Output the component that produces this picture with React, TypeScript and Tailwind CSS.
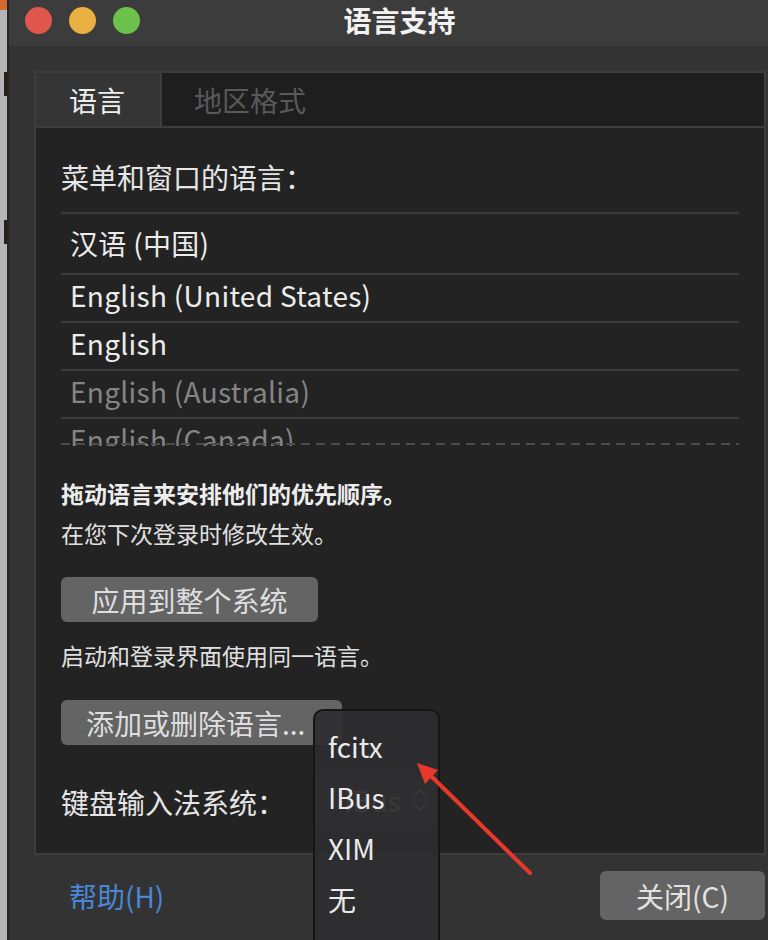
const langs = [
  { label: "汉语 (中国)", dim: false, h: "h-[61px] pb-[2px]" },
  { label: "English (United States)", dim: false, h: "h-[48px] pb-[6px]" },
  { label: "English", dim: false, h: "h-[48px] pb-[6px]" },
  { label: "English (Australia)", dim: true, h: "h-[48px] pb-[6px]" },
  { label: "English (Canada)", dim: true, h: "h-[48px] pb-[6px]" },
];

const methods = ["fcitx", "IBus", "XIM", "无"];

function TitleBar() {
  return (
    <div className="h-[46px] bg-[#3c3c3c] grid grid-cols-[1fr_auto_1fr] items-start">
      <div className="flex gap-[17px] pl-[16px] pt-[7px]">
        <div className="w-[27px] h-[27px] rounded-full bg-[#e0574d]" />
        <div className="w-[27px] h-[27px] rounded-full bg-[#eab041]" />
        <div className="w-[27px] h-[27px] rounded-full bg-[#6cc14a]" />
      </div>
      <div className="ml-[22px] pt-[2px] text-[28px] leading-[36px] font-bold text-[#f2f2f2]">
        语言支持
      </div>
      <div />
    </div>
  );
}

function Combo() {
  return (
    <div className="w-[122px] h-[54px] rounded-[6px] bg-[#3a3a3d] flex items-center pl-[30px] pr-[8px] justify-between">
      <span className="text-[28px] text-[#c8c8c8]">IBus</span>
      <svg width="16" height="26" viewBox="0 0 16 26" fill="none" stroke="#a8a8a8" strokeWidth="2">
        <path d="M2 9l6-6 6 6" />
        <path d="M2 17l6 6 6-6" />
      </svg>
    </div>
  );
}

export default function App() {
  return (
    <div
      className="relative w-[768px] h-[940px] overflow-hidden flex bg-[#333333] text-[#e6e6e6]"
      style={{ fontFamily: '"Noto Sans CJK SC", "Noto Sans", sans-serif' }}
    >
      {/* desktop edge */}
      <div className="w-[7px] bg-[#b5b5b5] flex flex-col">
        <div className="h-[10px] bg-[#d5692e]" />
        <div className="h-[62px]" />
        <div className="ml-[4px] h-[24px] bg-[#2a2015]" />
        <div className="h-[124px]" />
        <div className="ml-[4px] h-[24px] bg-[#2a2015]" />
      </div>
      <div className="w-[2px] bg-[#262626]" />

      <div className="flex-1 flex flex-col">
        <TitleBar />

        <div className="flex-1 pl-[25px] pr-[2px] pt-[25px]">
          {/* notebook */}
          <div className="border-2 border-[#3d3d3d] bg-[#232323]">
            <div className="h-[55px] flex bg-[#1e1e1e] border-b-2 border-[#3d3d3d]">
              <div className="w-[126px] bg-[#353535] border-r-2 border-[#3d3d3d] flex items-center pl-[33px] text-[28px] text-[#eeeeee]">
                语言
              </div>
              <div className="flex items-center pl-[32px] text-[28px] text-[#595959]">地区格式</div>
            </div>

            <div className="pl-[25px] pr-[25px] pt-[31px] pb-[26px]">
              <div className="text-[28px] leading-[36px]">菜单和窗口的语言：</div>

              <div className="relative mt-[17px] h-[234px] overflow-hidden border-t-2 border-[#3a3a3a]">
                {langs.map((l) => (
                  <div
                    key={l.label}
                    className={`${l.h} shrink-0 border-b-2 border-[#3a3a3a] flex items-center pl-[9px] text-[28px] tracking-[0.3px] ${
                      l.dim ? "text-[#858585]" : "text-[#ececec]"
                    }`}
                  >
                    {l.label}
                  </div>
                ))}
                <div className="absolute left-0 right-0 bottom-[1px] h-[2px] bg-[repeating-linear-gradient(90deg,#4d4d4d_0_9px,transparent_9px_15px)]" />
              </div>

              <div className="mt-[27px] text-[23px] leading-[40px]">
                <div className="font-bold text-[#ededed]">拖动语言来安排他们的优先顺序。</div>
                <div className="text-[#e0e0e0]">在您下次登录时修改生效。</div>
              </div>

              <button className="mt-[24px] h-[45px] w-[257px] rounded-[6px] bg-[#646464] text-[28px] text-[#dedede] flex items-center justify-center">
                应用到整个系统
              </button>

              <div className="mt-[13px] text-[23px] leading-[40px] text-[#e0e0e0]">启动和登录界面使用同一语言。</div>

              <button className="mt-[25px] h-[45px] w-[281px] rounded-[6px] bg-[#646464] text-[28px] text-[#dedede] flex items-center pl-[25px]">
                添加或删除语言...
              </button>

              <div className="mt-[28px] flex items-center">
                <div className="w-[253px] text-[28px] leading-[36px] pt-[4px]">键盘输入法系统：</div>
                <Combo />
              </div>
            </div>
          </div>

          {/* footer */}
          <div className="flex items-center justify-between pt-[16px] pl-[35px]">
            <span className="text-[28px] text-[#4a87d6]">帮助(H)</span>
            <button className="w-[165px] h-[49px] mr-[1px] rounded-[6px] bg-[#646464] text-[28px] text-[#e2e2e2] flex items-center justify-center">
              关闭(C)
            </button>
          </div>
        </div>
      </div>

      {/* open combo popup */}
      <div className="absolute left-[313px] top-[709px] w-[127px] h-[270px] rounded-[10px] border-2 border-[#151515] bg-[rgba(46,46,48,0.92)] pt-[9px]">
        {methods.map((m) => (
          <div key={m} className="h-[51px] flex items-center pl-[13px] text-[28px] text-[#eaeaea]">
            {m}
          </div>
        ))}
      </div>

      {/* annotation arrow */}
      <svg className="absolute inset-0 pointer-events-none" width="768" height="940">
        <line x1="530" y1="873" x2="431" y2="776" stroke="#e8382a" strokeWidth="4" strokeLinecap="round" />
        <polygon points="417,763 438,770 425,784" fill="#e8382a" />
      </svg>
    </div>
  );
}
